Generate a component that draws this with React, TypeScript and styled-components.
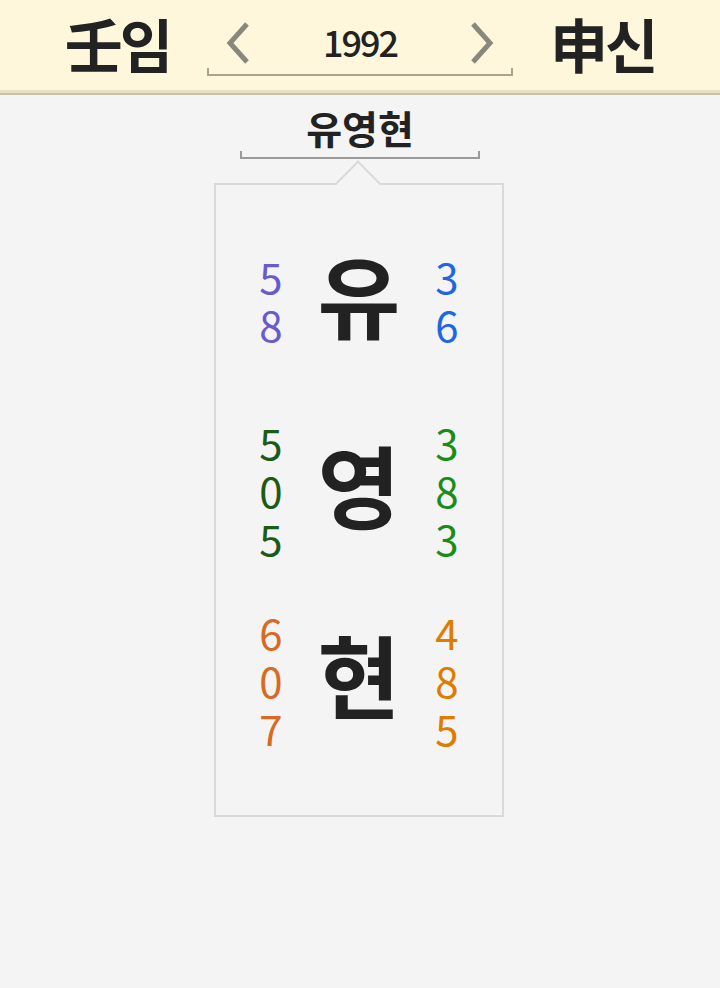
import React from 'react'
import styled, { createGlobalStyle } from 'styled-components'

const GlobalStyle = createGlobalStyle`
	html, body {
		margin: 0;
		padding: 0;
		background: #f4f4f4;
		font-family: 'Noto Sans CJK KR', 'Noto Sans', sans-serif;
		color: #222;
	}
`

type Syllable = {
	char: string
	left: string[]
	right: string[]
	leftColor: string
	rightColor: string
}

const syllables: Syllable[] = [
	{ char: '유', left: ['5', '8'], right: ['3', '6'], leftColor: '#6a5acd', rightColor: '#1f66e5' },
	{ char: '영', left: ['5', '0', '5'], right: ['3', '8', '3'], leftColor: '#1c5a16', rightColor: '#1a8c1a' },
	{ char: '현', left: ['6', '0', '7'], right: ['4', '8', '5'], leftColor: '#d86a22', rightColor: '#df7c00' },
]

export default function App() {
	return (
		<Page>
			<GlobalStyle />
			<Header>
				<GanJi>壬임</GanJi>
				<YearNav>
					<YearRow>
						<Arrow viewBox="0 0 26 44">
							<polyline points="22,3 5,22 22,41" />
						</Arrow>
						<Year>1992</Year>
						<Arrow viewBox="0 0 26 44">
							<polyline points="4,3 21,22 4,41" />
						</Arrow>
					</YearRow>
					<Bracket color="#a8a490" />
				</YearNav>
				<GanJi>申신</GanJi>
			</Header>
			<NameBlock>
				<Name>유영현</Name>
				<NameBracket color="#9a9a9a" />
			</NameBlock>
			<Card>
				{syllables.map((s) => (
					<Row key={s.char}>
						<Digits color={s.leftColor}>
							{s.left.map((d, i) => (
								<Digit key={i}>{d}</Digit>
							))}
						</Digits>
						<BigChar>
							<span>{s.char}</span>
						</BigChar>
						<Digits color={s.rightColor}>
							{s.right.map((d, i) => (
								<Digit key={i}>{d}</Digit>
							))}
						</Digits>
					</Row>
				))}
			</Card>
		</Page>
	)
}

const Page = styled.div`
	min-height: 988px;
	background: #f4f4f4;
`

const Header = styled.header`
	height: 90px;
	background: #fff7dc;
	border-bottom: 3px solid #e9e1c5;
	box-shadow: 0 2px 0 #c8c0a8;
	display: flex;
	justify-content: center;
	align-items: center;
	gap: 37px;
`

const GanJi = styled.div`
	font-size: 58px;
	font-weight: 700;
	line-height: 1;
	letter-spacing: -3px;
	color: #222;
	margin-top: -4px;
`

const YearNav = styled.div`
	width: 306px;
	display: flex;
	flex-direction: column;
	margin-top: 6px;
`

const YearRow = styled.div`
	display: flex;
	align-items: center;
	justify-content: space-between;
	padding: 0 18px;
	height: 44px;
`

const Arrow = styled.svg`
	width: 26px;
	height: 44px;
	fill: none;
	stroke: #8a887c;
	stroke-width: 5;
`

const Year = styled.div`
	font-size: 36px;
	font-weight: 500;
	line-height: 1;
	letter-spacing: -2px;
	color: #222;
	margin-top: -4px;
`

const Bracket = styled.div<{ color: string }>`
	height: 6px;
	margin-top: 3px;
	border: 2px solid ${({ color }) => color};
	border-top: none;
`

const NameBlock = styled.div`
	width: 240px;
	margin: 10px auto 0;
	display: flex;
	flex-direction: column;
	align-items: center;
`

const Name = styled.div`
	font-size: 39px;
	font-weight: 700;
	line-height: 48px;
	letter-spacing: 0;
	color: #222;
`

const NameBracket = styled(Bracket)`
	align-self: stretch;
	height: 6px;
	margin-top: 0;
`

const Card = styled.div`
	position: relative;
	width: 286px;
	height: 590px;
	margin: 24px auto 0;
	padding-top: 40px;
	border: 2px solid #dadada;
	display: flex;
	flex-direction: column;
	gap: 40px;
	transform: translateX(-1px);

	&::before {
		content: '';
		position: absolute;
		top: -18px;
		left: 50%;
		width: 32px;
		height: 32px;
		margin-left: -17px;
		background: #f4f4f4;
		border-top: 2px solid #dadada;
		border-left: 2px solid #dadada;
		transform: rotate(45deg);
		box-sizing: border-box;
	}
`

const Row = styled.div`
	display: grid;
	grid-template-columns: 110px minmax(0, 1fr) 110px;
	align-items: center;
	min-height: 150px;
`

const Digits = styled.div<{ color: string }>`
	display: flex;
	flex-direction: column;
	align-items: center;
	color: ${({ color }) => color};
`

const Digit = styled.span`
	display: block;
	font-size: 42px;
	line-height: 48px;
`

const BigChar = styled.div`
	display: flex;
	justify-content: center;
	min-width: 0;
	margin-bottom: 14px;
	font-size: 90px;
	font-weight: 700;
	line-height: 1;
	white-space: nowrap;
	color: #222;
`
